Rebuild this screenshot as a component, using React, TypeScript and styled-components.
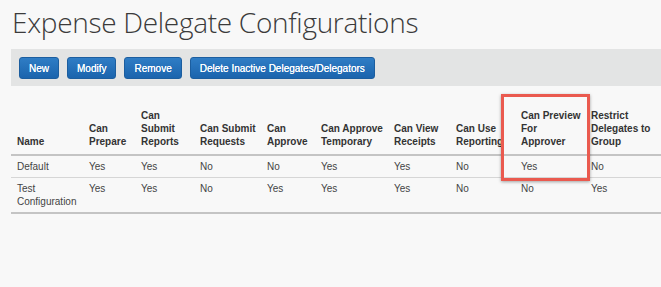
import React from 'react';
import styled, { createGlobalStyle } from 'styled-components';

const GlobalStyle = createGlobalStyle`
    html, body {
        margin: 0;
        padding: 0;
        background: #f8f8f8;
        overflow: hidden;
    }
`

const Page = styled.div`
    width: 661px;
    height: 287px;
    background: #f8f8f8;
    font-family: "Liberation Sans", Arial, sans-serif;
    color: #333;
`

const Title = styled.h1`
    margin: 0;
    padding: 8px 0 0 12px;
    font-family: "Open Sans", sans-serif;
    font-weight: 300;
    font-size: 28px;
    line-height: 28px;
    letter-spacing: -0.3px;
    color: #3b3b3b;
    white-space: nowrap;
`

const Toolbar = styled.div`
    margin: 13px 0 0 11px;
    padding: 8px 8px 7px 8px;
    background: #e3e4e4;
    display: flex;
    gap: 8px;
`

const Button = styled.button`
    height: 22px;
    padding: 0 9px;
    border: 1px solid #1c5e9f;
    border-radius: 3px;
    background: linear-gradient(#2f7dc5, #1b64ad);
    color: #fff;
    font-family: "Liberation Sans", Arial, sans-serif;
    font-size: 10px;
    text-shadow: 0 0 0.4px #fff;
    cursor: pointer;
`

const TableWrap = styled.div`
    position: relative;
    margin: 19px 0 0 11px;
`

const Table = styled.table`
    border-collapse: collapse;
    table-layout: fixed;
    width: 650px;
    font-size: 10px;
    line-height: 13px;
`

const Th = styled.th`
    text-align: left;
    vertical-align: bottom;
    font-weight: bold;
    color: #333;
    padding: 4px 2px 6px 6px;
    border-bottom: 2px solid #c4c4c4;
`

const Td = styled.td<{ $last?: boolean }>`
    vertical-align: top;
    color: #444;
    padding: 4px 2px 4px 6px;
    border-bottom: ${p => p.$last ? '2px solid #c4c4c4' : '1px solid #d6d6d6'};
`

const Highlight = styled.div`
    position: absolute;
    left: 490px;
    top: -11px;
    width: 89px;
    height: 87px;
    box-sizing: border-box;
    border: 3px solid #ea5a4f;
    box-shadow: 0 1px 3px rgba(0, 0, 0, 0.35);
    pointer-events: none;
`

const columns = [
    { label: 'Name', width: 72 },
    { label: 'Can Prepare', width: 52 },
    { label: 'Can Submit Reports', width: 59 },
    { label: 'Can Submit Requests', width: 67 },
    { label: 'Can Approve', width: 54 },
    { label: 'Can Approve Temporary', width: 73 },
    { label: 'Can View Receipts', width: 62 },
    { label: 'Can Use Reporting', width: 65 },
    { label: 'Can Preview For Approver', width: 70 },
    { label: 'Restrict Delegates to Group', width: 76 },
];

const rows = [
    ['Default', 'Yes', 'Yes', 'No', 'No', 'Yes', 'Yes', 'No', 'Yes', 'No'],
    ['Test Configuration', 'Yes', 'Yes', 'No', 'Yes', 'Yes', 'Yes', 'No', 'No', 'Yes'],
];

const App: React.FC = () => {
    return <Page>
        <GlobalStyle />
        <Title>Expense Delegate Configurations</Title>
        <Toolbar>
            <Button>New</Button>
            <Button>Modify</Button>
            <Button>Remove</Button>
            <Button>Delete Inactive Delegates/Delegators</Button>
        </Toolbar>
        <TableWrap>
            <Table>
                <colgroup>
                    {columns.map(c => <col key={c.label} style={{ width: c.width }} />)}
                </colgroup>
                <thead>
                    <tr>
                        {columns.map(c => <Th key={c.label}>{c.label}</Th>)}
                    </tr>
                </thead>
                <tbody>
                    {rows.map((r, i) =>
                        <tr key={r[0]}>
                            {r.map((v, j) => <Td key={j} $last={i === rows.length - 1}>{v}</Td>)}
                        </tr>
                    )}
                </tbody>
            </Table>
            <Highlight />
        </TableWrap>
    </Page>;
}

export default App;
